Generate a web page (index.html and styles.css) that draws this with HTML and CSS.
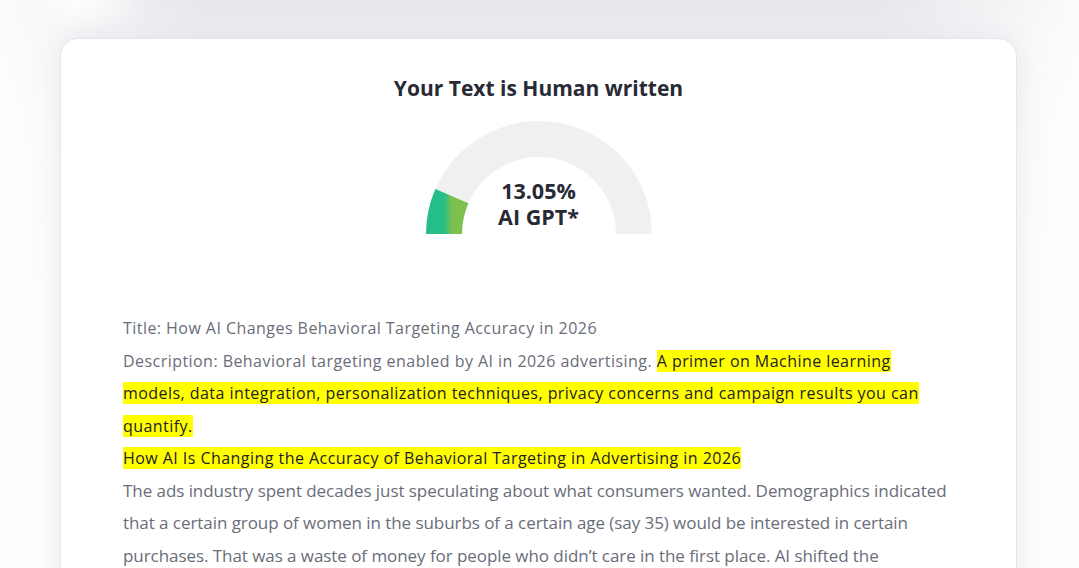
FILE: index.html
```html
<!DOCTYPE html>
<html>
<head>
<meta charset="utf-8">
<link rel="stylesheet" href="styles.css">
</head>
<body>
<div class="page">
  <div class="card">
    <h2 class="result-title">Your Text is Human written</h2>
    <div class="gauge">
      <svg width="230" height="116" viewBox="0 0 230 116">
        <defs>
          <linearGradient id="g" x1="0" y1="0" x2="1" y2="0">
            <stop offset="0" stop-color="#25bd88"/>
            <stop offset="1" stop-color="#7cc04e"/>
          </linearGradient>
        </defs>
        <path d="M 20 116 A 95 95 0 0 1 210 116" fill="none" stroke="#f0f0f0" stroke-width="36"/>
        <path d="M 20 116 A 95 95 0 0 1 27.88 78.11" fill="none" stroke="url(#g)" stroke-width="36"/>
      </svg>
      <div class="gauge-label">
        <span>13.05%</span>
        <span>AI GPT*</span>
      </div>
    </div>
    <div class="text">
      <div>Title: How AI Changes Behavioral Targeting Accuracy in 2026</div>
      <div>Description: Behavioral targeting enabled by AI in 2026 advertising. <mark>A primer on Machine learning <br>models, data integration, personalization techniques, privacy concerns and campaign results you can <br>quantify.</mark></div>
      <div><mark>How AI Is Changing the Accuracy of Behavioral Targeting in Advertising in 2026</mark></div>
      <div class="narrow">The ads industry spent decades just speculating about what consumers wanted. Demographics indicated<br>that a certain group of women in the suburbs of a certain age (say 35) would be interested in certain<br>purchases. That was a waste of money for people who didn’t care in the first place. AI shifted the<br>game by learning from behavior rather than assumptions.</div>
    </div>
  </div>
</div>
</body>
</html>
```
FILE: styles.css
```css
html, body {
  margin: 0;
  padding: 0;
}
body {
  width: 1079px;
  height: 568px;
  overflow: hidden;
  font-family: "Open Sans", "Noto Sans", sans-serif;
  background:
    radial-gradient(ellipse 60px 40px at 80px 0px, rgba(255,255,255,0.9), rgba(255,255,255,0)),
    linear-gradient(90deg, rgba(255,255,255,0.85) 0, rgba(255,255,255,0) 200px, rgba(255,255,255,0) 880px, rgba(255,255,255,0.85) 1079px),
    linear-gradient(180deg, #e7e7ec 0, #eeeef2 38px, #f6f6f8 120px, #fbfbfc 300px);
}
.page {
  padding: 38px 62px 0 60px;
}
.card {
  background: #fff;
  border: 1px solid #e4e4ea;
  border-radius: 18px;
  box-shadow: 0 0 30px rgba(200, 200, 215, 0.35);
  height: 600px;
  display: flex;
  flex-direction: column;
  align-items: center;
}
.result-title {
  margin: 35px 0 0;
  font-size: 21px;
  font-weight: 700;
  color: #272a35;
  line-height: 28px;
}
.gauge {
  position: relative;
  margin-top: 16px;
  width: 230px;
  height: 116px;
}
.gauge svg {
  display: block;
}
.gauge-label {
  position: absolute;
  left: 0;
  right: 0;
  top: 60px;
  display: flex;
  flex-direction: column;
  align-items: center;
  font-size: 21.5px;
  font-weight: 700;
  color: #272a35;
  line-height: 26px;
}
.text {
  align-self: stretch;
  margin: 78px 0 0 62px;
  font-size: 16px;
  letter-spacing: 0.45px;
  line-height: 32.5px;
  color: #6a6d79;
  white-space: nowrap;
}
mark {
  background: #ffff00;
  color: #1f2128;
}
.narrow {
  font-size: 17px;
  letter-spacing: -0.06px;
}
```
